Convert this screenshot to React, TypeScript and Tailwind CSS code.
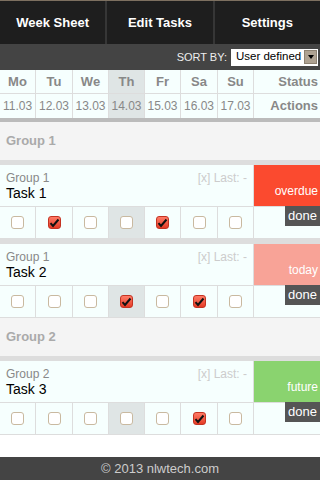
import { Fragment } from "react";

const days = [
  { d: "Mo", date: "11.03" },
  { d: "Tu", date: "12.03" },
  { d: "We", date: "13.03" },
  { d: "Th", date: "14.03" },
  { d: "Fr", date: "15.03" },
  { d: "Sa", date: "16.03" },
  { d: "Su", date: "17.03" },
];

const TODAY = 3;
const grid = "grid grid-cols-[36px_37px_36px_36px_36px_37px_36px_1fr]";

type Task = {
  group: string;
  name: string;
  status: "overdue" | "today" | "future";
  checks: number[];
};

const sections: { title: string; tasks: Task[] }[] = [
  {
    title: "Group 1",
    tasks: [
      { group: "Group 1", name: "Task 1", status: "overdue", checks: [1, 4] },
      { group: "Group 1", name: "Task 2", status: "today", checks: [3, 5] },
    ],
  },
  {
    title: "Group 2",
    tasks: [{ group: "Group 2", name: "Task 3", status: "future", checks: [5] }],
  },
];

const statusBg = {
  overdue: "bg-[#fb4a2f]",
  today: "bg-[#f8a397]",
  future: "bg-[#8ad36f]",
};

const Checkbox = ({ checked }: { checked: boolean }) =>
  checked ? (
    <span className="w-[13px] h-[13px] rounded-[3px] bg-gradient-to-b from-[#ff7a66] to-[#e53a24] border border-[#c43322] flex items-center justify-center">
      <svg width="11" height="10" viewBox="0 0 11 10">
        <path d="M1.5 5.2 L4 8 L9.5 1.5" stroke="#111" strokeWidth="2" fill="none" />
      </svg>
    </span>
  ) : (
    <span className="w-[13px] h-[13px] rounded-[3px] bg-white border border-[#c9b9a0]" />
  );

export default function App() {
  return (
    <div
      className="w-[320px] h-[480px] flex flex-col bg-white overflow-hidden"
      style={{ fontFamily: '"Liberation Sans", Arial, sans-serif' }}
    >
      <nav className="h-[44px] flex bg-[#1e1e1e] border-t border-[#7d7060]">
        {["Week Sheet", "Edit Tasks", "Settings"].map((t, i) => (
          <div
            key={t}
            className={`flex-1 flex items-center justify-center text-white font-bold text-[13px] ${
              i > 0 ? "border-l-2 border-[#363636]" : ""
            }`}
          >
            {t}
          </div>
        ))}
      </nav>

      <div className="h-[26px] bg-[#444] flex items-center justify-end pr-[2px] gap-[4px]">
        <span className="text-[11px] text-[#eee]">SORT BY:</span>
        <div className="h-[17px] w-[87px] bg-white flex items-center pl-[5px] pr-[1px]">
          <span className="flex-1 text-[11.5px] text-black leading-none whitespace-nowrap overflow-hidden">
            User defined
          </span>
          <span className="w-[13px] h-[14px] bg-[#aea292] border border-[#8d8272] flex items-center justify-center">
            <span className="w-0 h-0 border-l-[3px] border-r-[3px] border-t-[4px] border-l-transparent border-r-transparent border-t-black" />
          </span>
        </div>
      </div>

      <div className={`${grid} bg-[#f6fffe] text-[#888]`}>
        {days.map((x, i) => (
          <div
            key={x.d}
            className={`h-[24px] flex items-center justify-center font-bold text-[13px] border-r border-b border-[#ddd] ${
              i === TODAY ? "bg-[#dfe5e5]" : ""
            }`}
          >
            {x.d}
          </div>
        ))}
        <div className="h-[24px] flex items-center justify-end pr-[2px] font-bold text-[13px] border-b border-[#ddd]">
          Status
        </div>
        {days.map((x, i) => (
          <div
            key={x.date}
            className={`h-[24px] flex items-center justify-center text-[12px] border-r border-[#ddd] ${
              i === TODAY ? "bg-[#dfe5e5]" : ""
            }`}
          >
            {x.date}
          </div>
        ))}
        <div className="h-[24px] flex items-center justify-end pr-[2px] font-bold text-[13px]">
          Actions
        </div>
      </div>
      <div className="h-[4px] bg-[#bbb]" />

      {sections.map((s) => (
        <Fragment key={s.title}>
          <div className="h-[38px] bg-[#f4f4f4] flex items-center pl-[6px] text-[13px] font-bold text-[#aaa]">
            {s.title}
          </div>
          {s.tasks.map((t) => (
            <div key={t.name} className="border-t-[5px] border-[#ddd] bg-[#f6fffe]">
              <div className="flex h-[41px]">
                <div className="w-[254px] border-r border-[#ddd] pl-[6px] pr-[6px] pt-[6px] relative">
                  <div className="text-[12px] text-[#888] leading-[14px]">{t.group}</div>
                  <div className="text-[14px] text-black leading-[16px]">{t.name}</div>
                  <span className="absolute right-[6px] top-[6px] text-[12px] text-[#ccc] leading-[14px]">
                    [x] Last: -
                  </span>
                </div>
                <div
                  className={`flex-1 ${statusBg[t.status]} flex items-end justify-end pr-[2px] pb-[6px] text-[12px] text-white`}
                >
                  {t.status}
                </div>
              </div>
              <div className={`${grid} h-[33px] border-t border-b border-[#ddd]`}>
                {days.map((x, i) => (
                  <div
                    key={x.d}
                    className={`flex items-center justify-center border-r border-[#ddd] ${
                      i === TODAY ? "bg-[#dfe5e5]" : ""
                    }`}
                  >
                    <Checkbox checked={t.checks.includes(i)} />
                  </div>
                ))}
                <div className="flex justify-end items-start">
                  <span className="-mt-px h-[20px] w-[35px] bg-[#555] text-white text-[13px] flex items-center justify-center">
                    done
                  </span>
                </div>
              </div>
            </div>
          ))}
        </Fragment>
      ))}

      <div className="flex-1" />
      <footer className="h-[23px] bg-[#444] flex items-center justify-center text-[13px] text-[#ccc]">
        © 2013 nlwtech.com
      </footer>
    </div>
  );
}
